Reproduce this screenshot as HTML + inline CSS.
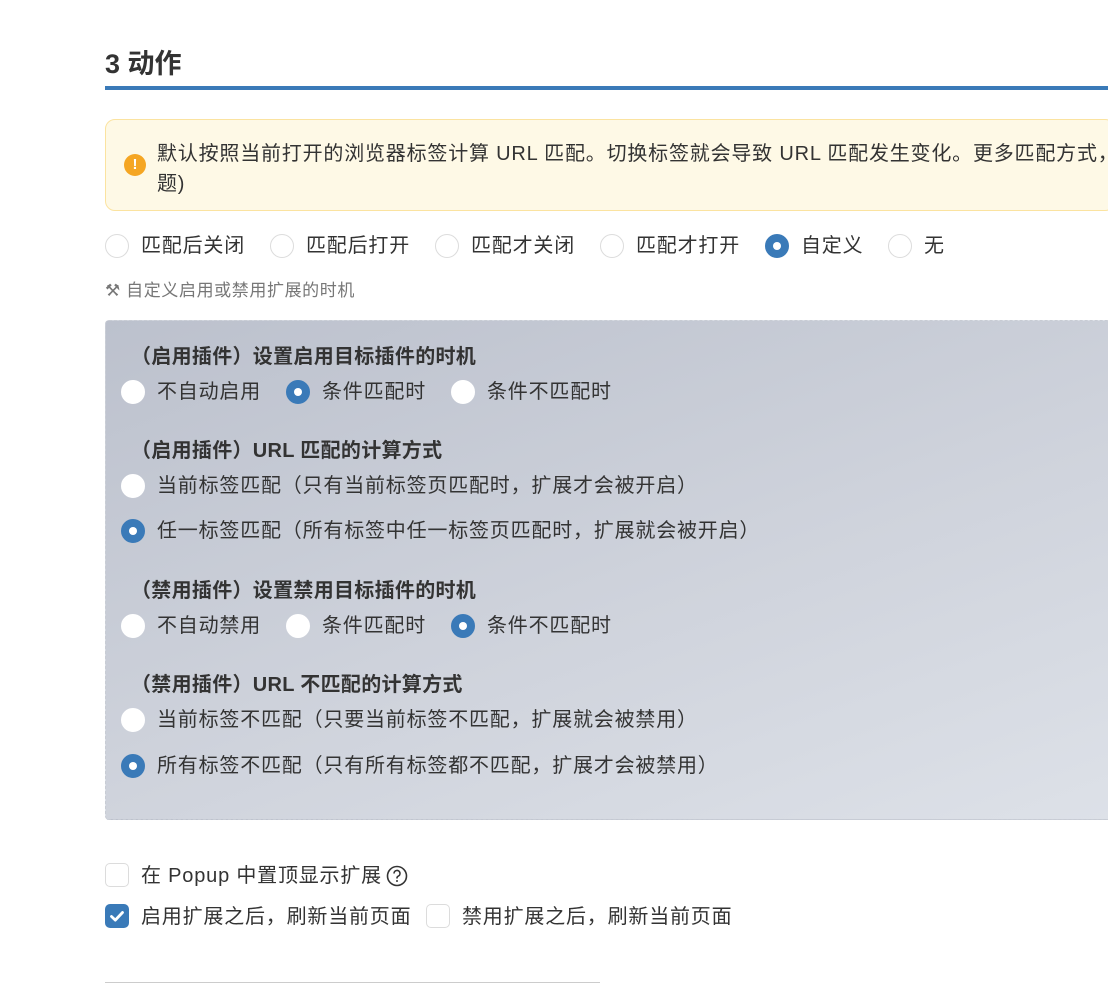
<!DOCTYPE html>
<html><head><meta charset="utf-8"><style>
*{box-sizing:border-box;margin:0;padding:0}
body{width:1108px;height:986px;overflow:hidden;background:#fff;font-family:"Liberation Sans","Noto Sans CJK SC",sans-serif;color:#333;position:relative}
.a{position:absolute;white-space:nowrap}
.t{font-size:20px;line-height:24px;letter-spacing:0.8px}
.r{position:absolute;width:24px;height:24px;border-radius:50%;background:#fff;border:1px solid #dcdcdc}
.r.on{background:#3a7ab8;border-color:#3a7ab8}
.r.on::after{content:"";position:absolute;left:7px;top:7px;width:8px;height:8px;border-radius:50%;background:#fff}
.p .r{border-color:#fff}
.p .r.on{border-color:#3a7ab8}
.h{font-size:20px;font-weight:bold;line-height:24px;color:#333;letter-spacing:0.3px}
.c{position:absolute;width:24px;height:24px;border-radius:5px;border:1px solid #dcdcdc;background:#fff}
</style></head><body>
<div class="a" style="left:105px;top:46px;font-size:27px;font-weight:bold;line-height:36px">3 动作</div>
<div class="a" style="left:105px;top:86px;width:1003px;height:4px;background:#3a7ab8"></div>
<div class="a" style="left:105px;top:119px;width:1010px;height:92px;background:#fef9e6;border:1px solid #fbe3a0;border-radius:10px"></div>
<div class="a" style="left:124px;top:154px;width:22px;height:22px;border-radius:50%;background:#f5a623;color:#fff;font-size:15px;font-weight:bold;text-align:center;line-height:22px">!</div>
<div class="a t" style="left:157px;top:139px;line-height:30px">默认按照当前打开的浏览器标签计算 URL 匹配。切换标签就会导致 URL 匹配发生变化。更多匹配方式，</div>
<div class="a t" style="left:157px;top:169px;line-height:30px">题)</div>

<div class="r" style="left:105px;top:234px"></div><div class="a t" style="left:141px;top:234px">匹配后关闭</div>
<div class="r" style="left:270px;top:234px"></div><div class="a t" style="left:306px;top:234px">匹配后打开</div>
<div class="r" style="left:435px;top:234px"></div><div class="a t" style="left:471px;top:234px">匹配才关闭</div>
<div class="r" style="left:600px;top:234px"></div><div class="a t" style="left:636px;top:234px">匹配才打开</div>
<div class="r on" style="left:765px;top:234px"></div><div class="a t" style="left:801px;top:234px">自定义</div>
<div class="r" style="left:888px;top:234px"></div><div class="a t" style="left:924px;top:234px">无</div>

<div class="a" style="left:105px;top:280px;font-size:17px;line-height:22px;color:#777;letter-spacing:0.6px">⚒ 自定义启用或禁用扩展的时机</div>

<div class="a p" style="left:105px;top:320px;width:1010px;height:500px;border:1px dashed #c8ccd4;border-radius:4px;background:linear-gradient(160deg,#bcc1cd 0%,#cfd3dc 55%,#dde1e8 100%)">
</div>
<div class="p">
<div class="a h" style="left:131px;top:345px">（启用插件）设置启用目标插件的时机</div>
<div class="r" style="left:121px;top:380px"></div><div class="a t" style="left:157px;top:380px">不自动启用</div>
<div class="r on" style="left:286px;top:380px"></div><div class="a t" style="left:322px;top:380px">条件匹配时</div>
<div class="r" style="left:451px;top:380px"></div><div class="a t" style="left:487px;top:380px">条件不匹配时</div>

<div class="a h" style="left:131px;top:439px">（启用插件）URL 匹配的计算方式</div>
<div class="r" style="left:121px;top:474px"></div><div class="a t" style="left:157px;top:474px">当前标签匹配（只有当前标签页匹配时，扩展才会被开启）</div>
<div class="r on" style="left:121px;top:519px"></div><div class="a t" style="left:157px;top:519px">任一标签匹配（所有标签中任一标签页匹配时，扩展就会被开启）</div>

<div class="a h" style="left:131px;top:579px">（禁用插件）设置禁用目标插件的时机</div>
<div class="r" style="left:121px;top:614px"></div><div class="a t" style="left:157px;top:614px">不自动禁用</div>
<div class="r" style="left:286px;top:614px"></div><div class="a t" style="left:322px;top:614px">条件匹配时</div>
<div class="r on" style="left:451px;top:614px"></div><div class="a t" style="left:487px;top:614px">条件不匹配时</div>

<div class="a h" style="left:131px;top:673px">（禁用插件）URL 不匹配的计算方式</div>
<div class="r" style="left:121px;top:708px"></div><div class="a t" style="left:157px;top:708px">当前标签不匹配（只要当前标签不匹配，扩展就会被禁用）</div>
<div class="r on" style="left:121px;top:754px"></div><div class="a t" style="left:157px;top:754px">所有标签不匹配（只有所有标签都不匹配，扩展才会被禁用）</div>
</div>

<div class="c" style="left:105px;top:863px"></div><div class="a t" style="left:141px;top:864px">在 Popup 中置顶显示扩展</div>
<svg class="a" style="left:386px;top:865px" width="22" height="22" viewBox="0 0 22 22"><circle cx="11" cy="11" r="9.5" fill="none" stroke="#333" stroke-width="1.6"/><path d="M8 8.5a3 3 0 1 1 4.2 2.7c-.8.4-1.2 1-1.2 1.8v.5" fill="none" stroke="#333" stroke-width="1.6"/><circle cx="11" cy="16" r="1" fill="#333"/></svg>
<div class="c" style="left:105px;top:904px;background:#3a7ab8;border-color:#3a7ab8"></div>
<svg class="a" style="left:105px;top:904px" width="24" height="24" viewBox="0 0 24 24"><path d="M6.5 12.5l3.8 3.6 7.2-7.6" fill="none" stroke="#fff" stroke-width="2.8" stroke-linecap="round" stroke-linejoin="round"/></svg>
<div class="a t" style="left:141px;top:905px">启用扩展之后，刷新当前页面</div>
<div class="c" style="left:426px;top:904px"></div><div class="a t" style="left:462px;top:905px">禁用扩展之后，刷新当前页面</div>
<div class="a" style="left:105px;top:982px;width:495px;height:1px;background:#ccc"></div>
</body></html>
